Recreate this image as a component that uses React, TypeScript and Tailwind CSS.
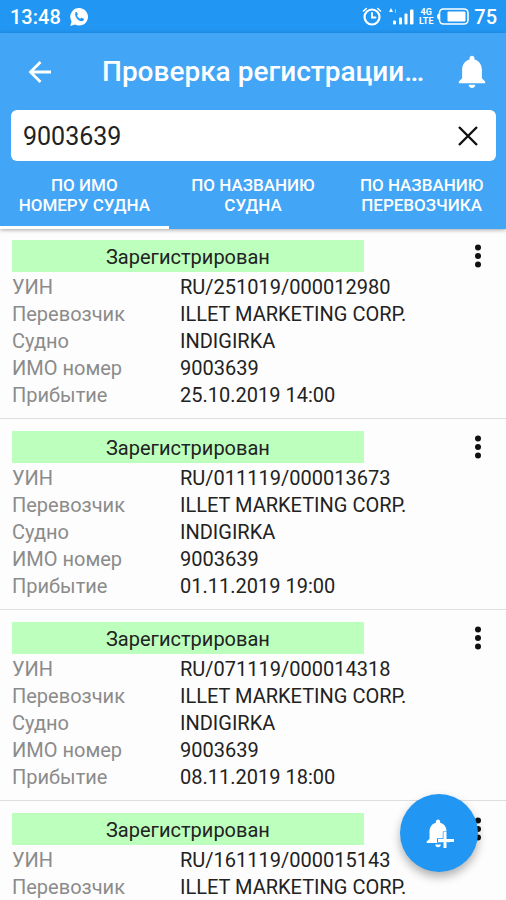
import React, { useState } from 'react';
import clsx from 'clsx';

const tabs = ['По ИМО номеру судна', 'По названию судна', 'По названию перевозчика'];

const records = [
  { uin: 'RU/251019/000012980', arrival: '25.10.2019 14:00' },
  { uin: 'RU/011119/000013673', arrival: '01.11.2019 19:00' },
  { uin: 'RU/071119/000014318', arrival: '08.11.2019 18:00' },
  { uin: 'RU/161119/000015143', arrival: '16.11.2019 12:00' },
];

const bellPath =
  'M12 22c1.1 0 2-.9 2-2h-4c0 1.1.9 2 2 2zm6-6v-5c0-3.07-1.63-5.64-4.5-6.32V4c0-.83-.67-1.5-1.5-1.5s-1.5.67-1.5 1.5v.68C7.64 5.36 6 7.92 6 11v5l-2 2v1h16v-1l-2-2z';

const StatusBar = () => (
  <div className="flex h-[33px] items-center bg-[#2196f3] pr-[9px] pl-[10px] text-[20px] font-medium text-white">
    <span>13:48</span>
    {/* Messenger */}
    <svg className="ml-2 h-5 w-5" viewBox="0 0 20 20">
      <path d="M10.2 1a8.8 8.8 0 1 1-4.1 16.6L1.3 19l1.3-4.6A8.8 8.8 0 0 1 10.2 1z" fill="#fff" />
      <path
        d="M6.4 5.4c.5-.5 1.2-.5 1.5 0l.9 1.7c.2.5-.5 1.2-.7 1.6.6 1.4 1.7 2.4 3.2 3 .5-.3 1-1.1 1.5-.9l1.8.9c.5.3.3 1.2-.1 1.7-3 3-9.7-3.300-8.1-8z"
        fill="#2196f3"
      />
    </svg>
    <div className="ml-auto flex items-center">
      {/* Alarm */}
      <svg className="h-5 w-5" viewBox="0 0 20 20" fill="none" stroke="#fff" strokeLinecap="round">
        <circle cx="10" cy="10" r="7.5" strokeWidth="2.2" />
        <path d="M10 6v4.500h3.500" strokeWidth="1.8" />
        <path d="M1.500 4 4.300 1.500M18.500 4 15.700 1.500" strokeWidth="1.6" />
      </svg>
      {/* Signal */}
      <svg className="ml-1 h-5 w-8" viewBox="0 0 32 20" fill="#fff">
        <path d="M5 1 3 5h4z" />
        <path d="M9 2h1v4H9z" opacity=".5" />
        <rect x="7" y="13.5" width="3" height="4" rx="1" />
        <rect x="13" y="10.5" width="3" height="7" rx="1" />
        <rect x="18.5" y="6.5" width="3" height="11" rx="1" />
        <rect x="24" y="2.5" width="3.5" height="15" rx="1" />
      </svg>
      <span className="flex w-4 flex-col items-center text-[9px] leading-[9px] font-bold">
        <span>4G</span>
        <span>LTE</span>
      </span>
      {/* Battery */}
      <svg className="ml-[3px] h-5 w-8" viewBox="0 0 32 20">
        <path d="M0 9.500c0-2 1-3 3-3v6c-2 0-3-1-3-3z" fill="#fff" />
        <rect x="2.5" y="2" width="28.5" height="15" rx="4" fill="none" stroke="#fff" strokeWidth="1.6" />
        <rect x="10.5" y="4.5" width="18" height="10" rx="1" fill="#fff" />
      </svg>
      <span className="ml-[5px]">75</span>
    </div>
  </div>
);

const Row = ({ label, value }: { label: string; value: string }) => (
  <div className="flex leading-[27px]">
    <dt className="w-[168px] shrink-0 text-[#8b8b8b]">{label}</dt>
    <dd className="text-[#222]">{value}</dd>
  </div>
);

const RecordCard = ({ uin, arrival }: { uin: string; arrival: string }) => (
  <li className="mb-3 border-b border-[#dedede] px-3 pb-[9px]">
    <div className="flex items-center justify-between">
      <div className="w-[73%] bg-[#bdffbd] pt-[2px] text-center leading-[30px] text-[#222]">Зарегистрирован</div>
      <button aria-label="Меню" className="flex h-8 w-8 items-center justify-center">
        <svg className="h-6 w-2" viewBox="0 0 8 24" fill="#111">
          <circle cx="4" cy="3.5" r="3" />
          <circle cx="4" cy="12" r="3" />
          <circle cx="4" cy="20.5" r="3" />
        </svg>
      </button>
    </div>
    <dl className="pt-[2px]">
      <Row label="УИН" value={uin} />
      <Row label="Перевозчик" value="ILLET MARKETING CORP." />
      <Row label="Судно" value="INDIGIRKA" />
      <Row label="ИМО номер" value="9003639" />
      <Row label="Прибытие" value={arrival} />
    </dl>
  </li>
);

const App = () => {
  const [query, setQuery] = useState('9003639');
  const [active, setActive] = useState(0);

  return (
    <div className="flex h-screen flex-col overflow-hidden bg-[#fdfdfd] font-['Roboto',sans-serif] text-[20px]">
      <StatusBar />

      <header className="relative z-10 bg-[#42a5f5] text-white shadow-[0_1px_4px_rgba(0,0,0,0.35)]">
        <div className="flex h-[77px] items-center pr-5 pl-7">
          <button aria-label="Назад" className="shrink-0">
            <svg className="h-6 w-6" viewBox="0 0 24 24" fill="none" stroke="#fff" strokeWidth="2.8">
              <path d="M23 12H2.500M12.500 2 2.500 12l10 10" />
            </svg>
          </button>
          <h1 className="ml-[50px] flex-1 truncate text-[28px] font-medium">Проверка регистрации…</h1>
          <button aria-label="Уведомления" className="shrink-0">
            <svg className="h-[34px] w-7" viewBox="3.5 2 17 20.5" preserveAspectRatio="none" fill="#fff">
              <path d={bellPath} />
            </svg>
          </button>
        </div>

        <div className="mr-[10px] ml-[11px] flex h-[51px] items-center rounded-md bg-white pr-[18px] pl-3">
          <input
            aria-label="Поиск"
            className="min-w-0 flex-1 pt-[2px] text-[25px] text-[#222] outline-none"
            value={query}
            onChange={(e) => setQuery(e.target.value)}
          />
          <button aria-label="Очистить" onClick={() => setQuery('')}>
            <svg className="h-5 w-5" viewBox="0 0 20 20" stroke="#111" strokeWidth="2.4">
              <path d="M1 1l18 18M19 1 1 19" />
            </svg>
          </button>
        </div>

        <nav className="grid h-[68px] grid-cols-3">
          {tabs.map((tab, i) => (
            <button
              key={tab}
              onClick={() => setActive(i)}
              className={clsx(
                'border-b-[3px] px-4 pt-[3px] text-[17px] leading-5 font-medium uppercase',
                i === active ? 'border-white' : 'border-transparent'
              )}
            >
              {tab}
            </button>
          ))}
        </nav>
      </header>

      <ul className="min-h-0 flex-1 overflow-y-auto pt-[11px] [scrollbar-width:none]">
        {records.map((record) => (
          <RecordCard key={record.uin} {...record} />
        ))}
      </ul>

      {/* Subscribe button */}
      <button
        aria-label="Добавить уведомление"
        className="fixed right-7 bottom-7 z-20 flex h-[78px] w-[78px] items-center justify-center rounded-full bg-[#2196f3] shadow-[0_5px_10px_rgba(0,0,0,0.3)]"
      >
        <svg className="h-8 w-8" viewBox="0 0 32 32">
          <path d={bellPath} transform="translate(-2 -1) scale(1.42)" fill="#fff" />
          <path d="M22 14.500v16.500M14 23.500h16.500" stroke="#2196f3" strokeWidth="4.4" />
          <path d="M22 15v16M15 23.500h16" stroke="#fff" strokeWidth="3" />
        </svg>
      </button>
    </div>
  );
};

export default App;
